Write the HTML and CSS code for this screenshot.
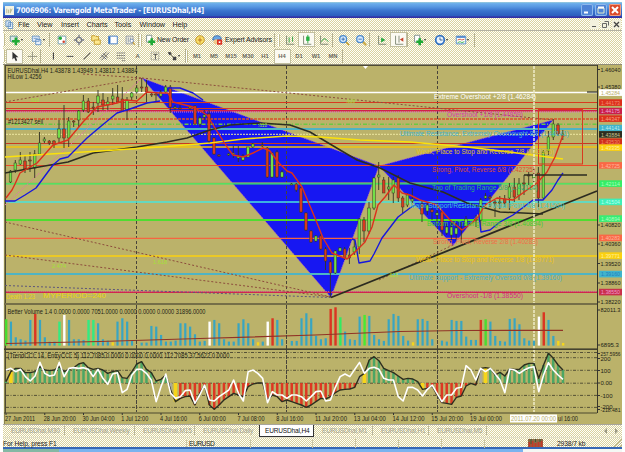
FILE: index.html
```html
<!DOCTYPE html>
<html lang="en">
<head>
  <meta charset="UTF-8" />
  <title>7006906: Varengold MetaTrader - [EURUSDhal,H4]</title>
  <link rel="stylesheet" href="styles.css">
</head>
<body>
  <div class="window">
    <div class="titlebar">
      <svg class="app-icon" viewBox="0 0 10 10"><rect width="10" height="10" fill="#f4f4e4"/><path d="M2 3v5M4 4v4M6 7l2-4M6 3v5" stroke="#b4b48c" fill="none"/></svg>
      <span class="title">7006906: Varengold MetaTrader - [EURUSDhal,H4]</span>
      <div class="win-buttons">
        <svg viewBox="0 0 12 12"><path d="M3 8.5h4" stroke="#fff" stroke-width="2"/></svg>
        <svg viewBox="0 0 12 12"><path d="M3 4h6v5H3z" stroke="#dfe9c9" fill="none"/><path d="M3 3.5h6" stroke="#fff" stroke-width="2"/></svg>
        <svg class="close" viewBox="0 0 12 12"><path d="M3 3l6 6M9 3l-6 6" stroke="#fff" stroke-width="2"/></svg>
      </div>
    </div>

    <div class="menubar">
      <svg class="doc-icon" viewBox="0 0 10 10"><path d="M1 1h5v6H1zM3.500 3h5v6.500h-5z" fill="#eef6ff" stroke="#5a8cc0"/><path d="M5 5h2M5 7h2" stroke="#5a8cc0"/></svg>
      <span class="m-file">File</span><span class="m-view">View</span><span class="m-insert">Insert</span><span class="m-charts">Charts</span><span class="m-tools">Tools</span><span class="m-window">Window</span><span>Help</span>
      <div class="mdi-buttons">
        <svg viewBox="0 0 9 9"><path d="M2 6.500h4" stroke="#555"/></svg>
        <svg viewBox="0 0 9 9"><path d="M3.500 1.500h4v4M1.500 3.500h4v4h-4z" stroke="#666" fill="none"/></svg>
        <svg viewBox="0 0 9 9"><path d="M2 2l5 5M7 2l-5 5" stroke="#444" stroke-width="1.300"/></svg>
      </div>
    </div>

    <div class="toolbar">
      <i class="grip"></i>
      <b class="drop"><svg viewBox="0 0 14 14"><path d="M1.500 2.500h8v6h-8z" fill="#dfe8e8" stroke="#5d8d96"/><path d="M8 4v9M3.500 8.500h9" stroke="#1faa35" stroke-width="3"/></svg></b>
      <b class="drop"><svg viewBox="0 0 14 14"><path d="M1.500 2.500h8v6h-8zM5.500 6.500h6v6h-6z" fill="#e8f1fb" stroke="#5b8cc4"/><path d="M3 5h5" stroke="#5b8cc4"/></svg></b>
      <i class="sep s4"></i>
      <b><svg viewBox="0 0 14 14"><path d="M2.500 2.500h9v9h-9z" fill="#fff" stroke="#6d97a8"/><circle cx="5" cy="5" r="2" fill="#22aa3a"/><circle cx="9" cy="9" r="1.500" fill="#d3422c"/></svg></b>
      <b><svg viewBox="0 0 14 14"><circle cx="7" cy="7" r="3" fill="none" stroke="#777b86" stroke-width="1.500"/><path d="M7 1v3M7 10v3M1 7h3M10 7h3" stroke="#777b86" stroke-width="1.500"/></svg></b>
      <b><svg viewBox="0 0 14 14"><path d="M2 2h4l1 1h3v5H2z" fill="#f9e58a" stroke="#c19724"/><path d="M5 7h7v5H5z" fill="#ffe98f" stroke="#c19724"/></svg></b>
      <b><svg viewBox="0 0 14 14"><path d="M2 2.500h10v9H2z" fill="#fff" stroke="#2f6fc4"/><path d="M3 3v8" stroke="#2f6fc4" stroke-width="2"/></svg></b>
      <b><svg viewBox="0 0 14 14"><path d="M2.500 2.500h8v9h-8z" fill="#f0efe0" stroke="#8a92a0"/><path d="M5 4v6M7.500 4v4" stroke="#8a92a0"/><circle cx="9" cy="8" r="2" fill="#fff" stroke="#6d86ad"/><path d="M10.500 9.500l2 3" stroke="#c9a13a" stroke-width="1.500"/></svg></b>
      <i class="sep s2"></i><i class="grip g4"></i>
      <b class="b12"><svg viewBox="0 0 14 14"><path d="M3 1.500h6v8H3z" fill="#fff" stroke="#7a8b8b"/><path d="M9 5v8M5 9h8" stroke="#1faa35" stroke-width="3"/></svg></b>
      <span class="label-order">New Order</span>
      <b><svg viewBox="0 0 14 14"><circle cx="7" cy="7" r="5" fill="#fbe06a" stroke="#b98a18"/><path d="M7 4v6M4.500 7h5" stroke="#b06d18" fill="none"/></svg></b>
      <b><svg viewBox="0 0 14 14"><path d="M2 7q0-5 5-5t5 4l-3 1z" fill="#69a5e2" stroke="#3569aa"/><circle cx="6" cy="9" r="3" fill="#f0c98b"/><path d="M7 6.500h6v6H7z" fill="#dc3322"/><path d="M9 8.500h2v2H9z" fill="#fff"/></svg></b>
      <span class="label-expert">Expert Advisors</span>
      <i class="sep s4"></i><i class="grip"></i>
      <b><svg viewBox="0 0 14 14"><path d="M3 2v10h9" fill="none" stroke="#76806c"/><path d="M6 4v6M10 3v6" stroke="#1f9b35"/></svg></b>
      <b class="pressed"><svg viewBox="0 0 14 14"><path d="M3 2v10h9" fill="none" stroke="#76806c"/><path d="M8 1v10" stroke="#1f9b35"/><path d="M6 3h4v5H6z" fill="#29b243"/></svg></b>
      <b><svg viewBox="0 0 14 14"><path d="M3 2v10h9" fill="none" stroke="#76806c"/><path d="M4 9q3-7 8 0" fill="none" stroke="#1f9b35"/></svg></b>
      <i class="sep s3"></i>
      <b><svg viewBox="0 0 14 14"><path d="M9 9l4 4" stroke="#c7a233" stroke-width="2"/><circle cx="6" cy="6" r="4" fill="#d8ecff" stroke="#4b8ace" stroke-width="1.500"/><path d="M4 6h4M6 4v4" stroke="#2b62a8"/></svg></b>
      <b><svg viewBox="0 0 14 14"><path d="M9 9l4 4" stroke="#c7a233" stroke-width="2"/><circle cx="6" cy="6" r="4" fill="#d8ecff" stroke="#4b8ace" stroke-width="1.500"/><path d="M4 6h4" stroke="#2b62a8"/></svg></b>
      <i class="sep s4"></i>
      <b><svg viewBox="0 0 14 14"><path d="M3 2v10h9" fill="none" stroke="#76806c"/><path d="M6 4l5 3-5 3z" fill="#25a83c"/></svg></b>
      <b class="pressed"><svg viewBox="0 0 14 14"><path d="M3 2v10h9M7 2v8" fill="none" stroke="#76806c"/><path d="M12 4L8 6.500 12 9z" fill="#c6432c"/></svg></b>
      <i class="sep s2"></i>
      <b class="drop"><svg viewBox="0 0 14 14"><path d="M3 1.500h6v8H3z" fill="#fff" stroke="#7a8b8b"/><path d="M9 5v8M5 9h8" stroke="#1faa35" stroke-width="3"/></svg></b>
      <b class="drop"><svg viewBox="0 0 14 14"><circle cx="7" cy="7" r="5" fill="#e9f4ff" stroke="#2f70c2" stroke-width="2"/><path d="M7 4v3h3" stroke="#2c4f80" fill="none"/></svg></b>
      <b class="drop"><svg viewBox="0 0 14 14"><path d="M1.500 2.500h11v9h-11z" fill="#fff" stroke="#4a85cc"/><path d="M2 3.500h10" stroke="#4a85cc" stroke-width="2"/><path d="M3 7l3-1 2 1 3-1" stroke="#c6432c" fill="none"/><path d="M3 10l3-1 2 1 3-1" stroke="#25a83c" fill="none"/></svg></b>
      <i class="sep s2"></i>
    </div>

    <div class="toolbar tools">
      <i class="grip"></i>
      <b class="pressed"><svg viewBox="0 0 14 14"><path d="M4 2v9l2-2 2 4 1.500-1L8 8.500h3z" fill="#333"/></svg></b>
      <b><svg viewBox="0 0 14 14"><path d="M7.500 2v11M2 7.500h11" stroke="#8c8c78"/></svg></b>
      <i class="sep s4"></i>
      <b><svg viewBox="0 0 14 14"><path d="M7.500 3v8" stroke="#444" stroke-width="1.300"/></svg></b>
      <b><svg viewBox="0 0 14 14"><path d="M3 7.500h8" stroke="#666" stroke-width="1.300"/></svg></b>
      <b><svg viewBox="0 0 14 14"><path d="M3 11l8-8" stroke="#666" stroke-width="1.300"/></svg></b>
      <b><svg viewBox="0 0 14 14"><path d="M2 10l8-8M4 12l9-9M4 6l6 5M6 4l5 5" stroke="#555"/></svg></b>
      <b><svg viewBox="0 0 14 14"><path d="M2 3.500h10M2 6.500h10M2 9.500h10M8 12.500h4" stroke="#666" stroke-dasharray="2 .6"/></svg></b>
      <b class="letter">A</b>
      <b><svg viewBox="0 0 14 14"><path d="M2.500 2.500h9v9h-9z" fill="none" stroke="#777" stroke-dasharray="1 1"/><path d="M5 5h5M7.500 5v6" stroke="#444"/></svg></b>
      <b class="drop"><svg viewBox="0 0 14 14"><path d="M2 3l3-1 2 3-3 1zM8 8h4v4H8z" fill="#444"/><path d="M6 6l3 3" stroke="#555"/></svg></b>
      <i class="sep s1"></i><i class="grip"></i>
      <b class="letter">M1</b><b class="letter">M5</b><b class="letter">M15</b><b class="letter">M30</b><b class="letter">H1</b><b class="letter pressed">H4</b><b class="letter">D1</b><b class="letter">W1</b><b class="letter">MN</b>
      <i class="sep s2"></i>
    </div>

    <svg class="chart" id="chart" viewBox="3 64 619 360"></svg>

    <div class="tabs">
      <span class="tab t1">EURUSDhal,M30</span><span class="tab t2">EURUSDhal,Weekly</span><span class="tab t3">EURUSDhal,M15</span><span class="tab t4">EURUSDhal,Daily</span><span class="tab active">EURUSDhal,H4</span><span class="tab t5">EURUSDhal,M1</span><span class="tab t6">EURUSDhal,H1</span><span class="tab t7">EURUSDhal,M5</span>
      <svg class="tab-arrows" viewBox="0 0 20 8"><path d="M5 1v6L2 4zM13 1v6l3-3z" fill="#9c9a84"/></svg>
    </div>

    <div class="statusbar">
      <span class="help">For Help, press F1</span>
      <span class="symbol">EURUSD</span>
      <span class="cell c1"></span><span class="cell c2"></span><span class="cell c2"></span><span class="cell c2"></span><span class="cell c2"></span><span class="cell c3"></span>
      <svg class="meter" viewBox="0 0 15 8"><path d="M0 0h15v8H0z" fill="#8b6a45"/><path d="M1.500 3v5M4.500 2v6M7.500 4v4M10.500 3v5M13.500 2v6" stroke="#c23a28" stroke-width="2"/><path d="M3 0v5M7.500 0v3M12 0v3" stroke="#3f5a35"/></svg>
      <span class="traffic">2938/7 kb</span>
      <svg class="resize" viewBox="0 0 8 8"><path d="M0 8l8-8M3 8l5-5M6 8l2-2" stroke="#b5b08a"/></svg>
    </div>
  </div>
  <div class="taskbar"><div class="taskbar-blue"><div class="start"></div></div></div>

  <script src="chart.js"></script>
</body>
</html>
```
FILE: styles.css
```css
body {
  margin: 0;
  width: 625px;
  height: 452px;
  background: #fff;
  overflow: hidden;
  font-family: "Liberation Sans", Arial, sans-serif;
  font-size: 7px;
  color: #222;
}
svg {
  display: block;
  flex: none;
}
.window {
  margin: 2px 3px 0;
  width: 619px;
  height: 445px;
  display: flex;
  flex-direction: column;
  background: repeating-conic-gradient(#fffffa 0 25%, #dad29e 0 50%) 0 0 / 2px 2px;
}
.window span {
  white-space: nowrap;
  flex: none;
}
.titlebar {
  height: 16px;
  flex: none;
  display: flex;
  align-items: center;
  box-sizing: border-box;
  padding: 0 1px 0 2px;
  background: linear-gradient(#9ccdda 0, #6aaceb 10%, #5797e2 30%, #3a74cd 55%, #2b5cbd 88%, #3432a6 92%);
  color: #f4f7ff;
}
.app-icon {
  width: 9px;
  height: 9px;
}
.title {
  margin-left: 2px;
  width: 192px;
  font: bold 7.8px "DejaVu Sans Condensed", "DejaVu Sans", sans-serif;
  letter-spacing: -0.25px;
}
.win-buttons {
  margin-left: auto;
  display: flex;
  gap: 2px;
}
.win-buttons svg {
  width: 12px;
  height: 12px;
  background: #4e83d5;
  border-radius: 2px;
  box-shadow: inset 0 0 0 1px #8db8eb;
}
.win-buttons .close {
  background: #db4b2c;
  box-shadow: inset 0 0 0 1px #ef9d82;
}
.menubar {
  height: 12px;
  flex: none;
  display: flex;
  align-items: center;
  border-bottom: 1px solid #b3b1a0;
  padding-left: 2px;
  font-size: 7.2px;
}
.doc-icon {
  width: 9px;
  height: 9px;
  margin-right: 4px;
}
.m-file { width: 19px; }
.m-view { width: 24px; }
.m-insert { width: 25.5px; }
.m-charts { width: 28px; }
.m-tools { width: 25px; }
.m-window { width: 33px; }
.mdi-buttons {
  margin-left: auto;
  display: flex;
  gap: 2px;
  padding-right: 1px;
}
.mdi-buttons svg {
  width: 9px;
  height: 9px;
  background: #f3f1de;
}
.toolbar {
  height: 17px;
  flex: none;
  display: flex;
  align-items: center;
  box-sizing: border-box;
}
.tools {
  height: 16px;
}
.toolbar b {
  flex: none;
  width: 17px;
  height: 15px;
  display: flex;
  align-items: center;
  justify-content: center;
  box-sizing: border-box;
}
.toolbar b svg {
  width: 12px;
  height: 12px;
}
.toolbar b.drop {
  width: 21.5px;
  justify-content: flex-start;
  padding-left: 3px;
}
.toolbar b.drop::after {
  content: "";
  border: 1.5px solid transparent;
  border-top: 2px solid #333;
  border-bottom: 0;
}
.toolbar b.b12 { width: 12px; }
.toolbar b.letter {
  font-size: 5.8px;
  color: #6a685c;
}
.toolbar b.pressed {
  background: #fbfaf2;
  border: 1px solid #c2bf9f;
}
.grip {
  flex: none;
  width: 3px;
  height: 12px;
  background: linear-gradient(90deg, #fff 1px, #c4be90 1px 2px, transparent 2px);
}
.g4 { width: 4px; }
.sep {
  flex: none;
  height: 14px;
  background: linear-gradient(90deg, #b5b190 1px, transparent 1px);
}
.s1 { width: 1px; }
.s2 { width: 2px; }
.s3 { width: 3px; }
.s4 { width: 4px; }
.label-order {
  width: 34px;
  padding-left: 1px;
  font-size: 6.8px;
  letter-spacing: -0.1px;
}
.label-expert {
  width: 49px;
  font-size: 7px;
  letter-spacing: -0.12px;
}
.chart {
  width: 619px;
  height: 360px;
}
.chart text {
  font-family: "Liberation Sans", Arial, sans-serif;
}
.tabs {
  height: 13px;
  flex: none;
  display: flex;
  box-sizing: border-box;
  border-top: 1px solid #a8a59a;
  font-size: 6.5px;
  letter-spacing: -0.15px;
  line-height: 11px;
}
.tab {
  box-sizing: border-box;
  height: 9px;
  line-height: 9px;
  margin-top: 1px;
  padding-left: 8px;
  color: #a3a18c;
  border-right: 1px solid #b9b69c;
}
.tab.active {
  width: 55px;
  height: 12px;
  line-height: 11px;
  margin-top: 0;
  padding-left: 5px;
  background: #fff;
  border: 1px solid #333;
  border-top: 0;
  color: #111;
}
.t1 { width: 62px; }
.t2 { width: 70px; }
.t3 { width: 60px; }
.t4 { width: 64px; border: 0; }
.t5 { width: 59px; }
.t6 { width: 56px; }
.t7 { width: 58px; }
.tab-arrows {
  width: 20px;
  height: 8px;
  margin: 2px 0 0 auto;
}
.statusbar {
  height: 11px;
  flex: none;
  display: flex;
  align-items: center;
  box-sizing: border-box;
  border-top: 1px solid #e3e0c8;
  font-size: 6.7px;
  letter-spacing: -0.1px;
}
.help { width: 183px; }
.symbol {
  width: 61px;
  padding-left: 2px;
  border-left: 1px solid #c9c5a4;
  letter-spacing: -0.5px;
}
.cell {
  height: 9px;
  box-sizing: border-box;
  border-left: 1px solid #c9c5a4;
}
.c1 { width: 62px; }
.c2 { width: 43px; }
.c3 { width: 44px; }
.meter {
  width: 15px;
  height: 8px;
}
.traffic { margin-left: 14px; }
.resize {
  width: 8px;
  height: 8px;
  margin-left: auto;
}
.taskbar {
  height: 5px;
  margin: 0 3px;
  background: linear-gradient(#3768b5 2px, #f4f8f4 2px);
}
.taskbar-blue {
  width: 520px;
  height: 3px;
  padding-top: 2px;
  background: linear-gradient(#3768b5 2px, #79b3ef 2px);
}
.start {
  width: 56px;
  height: 3px;
  background: #84b8a4;
}
```
FILE: chart.js
```js
const svg = document.getElementById('chart');
const parts = [];
const STEP = 4.843;
const X0 = 6;

function line(x1, y1, x2, y2, color, w = 1, dash = '') {
  parts.push(`<line x1="${x1}" y1="${y1}" x2="${x2}" y2="${y2}" stroke="${color}" stroke-width="${w}" stroke-dasharray="${dash}"/>`);
}
function rect(x, y, w, h, fill) {
  parts.push(`<rect x="${x}" y="${y}" width="${w}" height="${h}" fill="${fill}"/>`);
}
function poly(points, color, w = 1.2) {
  parts.push(`<polyline points="${points}" fill="none" stroke="${color}" stroke-width="${w}" stroke-linejoin="round"/>`);
}
function text(x, y, str, color, len, size = 6.6) {
  const fit = len ? `textLength="${len}" lengthAdjust="spacingAndGlyphs"` : '';
  parts.push(`<text x="${x}" y="${y}" fill="${color}" font-size="${size}" ${fit}>${str}</text>`);
}

rect(3, 64, 619, 360, '#bbb26a');
rect(3, 64, 619, 1, '#8f8c78');
rect(3, 65, 1, 359, '#f5f3df');
rect(4, 65, 1, 359, '#8a854f');
rect(5, 65, 592, 1, '#4f4b35');
rect(5, 65, 1, 348, '#4f4b35');

// price channels filled between swing points
parts.push('<g fill="#1717f2" stroke="#b05cc0" stroke-width=".8" stroke-dasharray="1.5 1"><path d="M142 78L379 166 331 297.500z"/><path d="M379 166L553 120 453 245.500z"/></g>');

// vertical session separators
for (const x of [136.5, 286.5, 437.5]) line(x, 66, x, 412, '#47433a', 1, '3 2');

// horizontal levels
const levels = [
  [92.5, '#fff', 1.4], [102.5, '#d83a20', 1], [108.5, '#d83a20', 1], [110.7, '#d02048', 1.5],
  [112, '#e06cd0', 1, '1 1'], [119, '#d8522a', 1.4, '3 1'], [124.3, '#6cc843', 1.6, '4 1.5 1 2'],
  [129, '#4fb3c4', 2], [134.3, '#eee6a0', 1, '2 1'], [143.5, '#c83a20', 1], [147, '#f0c410', 1.6],
  [165.5, '#ee4a28', 1], [182.9, '#a8b060', 1], [183.9, '#38ee60', 1.4], [202, '#48e4dc', 1.5],
  [220, '#4fdd30', 1.8], [238.3, '#f56640', 1.3], [256, '#fbd010', 1.4],
  [274, '#4fb4c4', 1.8], [291.5, '#d050a0', 1, '1 1'], [292.4, '#d0284c', 1.2]
];
for (const [y, color, w, dash] of levels) line(6, y, 597, y, color, w, dash);

// projection lines
const projections = [
  [142, 78, 553, 120], [5, 102, 142, 78], [83, 74, 142, 78],
  [5, 222, 331, 297], [5, 255, 331, 297]
];
for (const p of projections) line(...p, '#8d4c3c', 1, '2 2');
line(5, 285.5, 331, 297.5, '#5d567a', 1, '2 2');
line(5, 205, 142, 78, '#e573aa', 1, '1.500 1');
line(379, 280, 453, 245, '#8d4c3c', 1, '2 2');

// [x, high, low, body top, body bottom, colour]
const candles = [
  [10.5, 170, 183, 171, 182, 'g'], [15.3, 160, 173, 163, 170, 'g'], [20.3, 152, 165, 160, 164, 'g'], [25, 155, 173, 161, 169, 'r'],
  [30, 152, 172, 160, 161, 'r'], [34.7, 150, 178, 154, 168, 'g'], [39.5, 132, 155, 143, 154, 'g'], [44.4, 137, 143, 139, 141, 'g'],
  [49.3, 140, 145, 141, 143, 'r'], [54, 140, 148, 141, 144, 'r'], [59, 120, 143, 129, 138, 'g'], [64, 105, 148, 129, 138, 'r'],
  [68.7, 117, 147, 121, 138, 'g'], [73.7, 120, 127, 121, 122, 'r'], [78.7, 110, 127, 111, 120, 'g'], [83.4, 95, 112, 101, 110, 'g'],
  [88.3, 98, 113, 101, 112, 'r'], [93.3, 102, 115, 107, 108, 'r'], [98, 90, 112, 96, 103, 'g'], [103, 93, 110, 100, 105, 'r'],
  [107.8, 97, 110, 102, 105, 'g'], [112.7, 88, 105, 96, 99, 'g'], [117.6, 85, 103, 97, 102, 'r'], [122.3, 87, 112, 99, 111, 'r'],
  [127, 97, 120, 100, 110, 'g'], [131.7, 92, 100, 93, 97, 'g'], [136.7, 85, 93, 88, 92, 'g'], [141.7, 78, 92, 87, 88, 'r'],
  [146.5, 80, 102, 87, 92, 'r'], [151.7, 92, 97, 94, 95, 'r'], [156, 93, 102, 94, 95, 'r'], [160.7, 90, 98, 92, 96, 'g'],
  [165.7, 85, 93, 87, 92, 'g'], [170.3, 85, 113, 87, 107, 'r'], [175, 105, 110, 107, 108, 'g'], [180, 105, 110, 108, 109, 'r'],
  [190, 105, 110, 107, 108, 'g'], [195, 105, 125, 106, 124, 'r'], [200, 116, 127, 118, 124, 'g'], [204.3, 110, 120, 115, 117, 'g'],
  [209, 110, 143, 114, 141, 'r'], [214, 137, 155, 138, 154, 'r'], [219, 154, 157, 155, 156, 'r'], [228.5, 153, 156, 154, 155, 'g'],
  [233.3, 146, 158, 153, 154, 'g'], [238.3, 146, 162, 156, 158, 'g'], [243, 154, 161, 156, 160, 'g'], [248, 147, 157, 147, 157, 'g'],
  [252.8, 143, 148, 144, 147, 'g'], [262.3, 142, 147, 145, 146, 'r'], [267.3, 147, 178, 148, 177, 'r'], [272, 152, 178, 153, 177, 'g'],
  [277, 150, 178, 152, 177, 'r'], [282, 170, 178, 172, 177, 'g'], [291.5, 183, 185, 184, 185, 'g'], [296.3, 183, 192, 184, 190, 'r'],
  [301, 187, 213, 188, 212, 'r'], [306, 212, 231, 213, 230, 'r'], [311, 230, 243, 231, 242, 'r'], [315.8, 235, 242, 236, 241, 'g'],
  [320.7, 234, 250, 236, 249, 'r'], [325.5, 247, 270, 249, 261, 'r'], [330.4, 260, 297, 262, 273, 'r'], [335.3, 250, 274, 251, 273, 'g'],
  [340, 247, 251, 248, 251, 'g'], [344.7, 247, 260, 249, 258, 'r'], [349.4, 248, 264, 255, 258, 'r'], [354.3, 240, 255, 247, 252, 'g'],
  [359.3, 218, 254, 219, 247, 'g'], [364, 217, 242, 220, 231, 'r'], [369, 202, 234, 208, 231, 'g'], [374, 177, 210, 178, 208, 'g'],
  [378.7, 162, 190, 175, 177, 'g'], [383.7, 177, 193, 180, 193, 'r'], [388.7, 177, 200, 187, 189, 'g'], [393.3, 177, 203, 180, 193, 'g'],
  [398.3, 175, 202, 178, 198, 'r'], [402.7, 196, 213, 198, 207, 'r'], [407.4, 193, 207, 195, 205, 'g'], [412.3, 188, 203, 199, 201, 'g'],
  [422, 200, 222, 204, 214, 'r'], [427.3, 202, 215, 205, 211, 'g'], [432, 208, 220, 210, 212, 'r'], [437, 210, 222, 213, 215, 'g'],
  [442, 211, 236, 212, 230, 'r'], [446.7, 224, 235, 227, 233, 'g'], [451.4, 222, 242, 227, 235, 'g'], [456.2, 223, 240, 228, 234, 'g'],
  [461.3, 222, 243, 229, 230, 'r'], [466, 216, 228, 219, 226, 'g'], [476, 215, 227, 219, 220, 'r'], [480.7, 198, 230, 200, 220, 'g'],
  [485.5, 193, 199, 196, 198, 'g'], [490, 195, 207, 197, 198, 'r'], [495, 200, 217, 202, 203, 'r'], [499.8, 196, 209, 202, 203, 'g'],
  [504.7, 195, 207, 199, 203, 'r'], [509.4, 183, 210, 187, 198, 'g'], [514.3, 178, 202, 187, 197, 'r'], [519, 178, 200, 184, 195, 'g'],
  [524, 175, 195, 183, 184, 'r'], [528.7, 172, 185, 175, 176, 'r'], [533.7, 166, 183, 175, 178, 'g'], [538.4, 167, 207, 173, 198, 'r'],
  [543.4, 150, 200, 152, 198, 'g'], [548.4, 131, 155, 137, 151, 'g'], [553.3, 119, 140, 124, 137, 'g'], [558, 123, 136, 125, 134, 'r'], [562.8, 130, 140, 134, 136, 'g']
];
for (const [x, hi, lo, top, bot, c] of candles) {
  line(x, hi, x, lo, '#343424', .9);
  parts.push(`<rect x="${x - 1.3}" y="${top}" width="2.600" height="${Math.max(bot - top, .6)}" fill="${c === 'g' ? '#72df48' : '#d83820'}" stroke="#3c3c22" stroke-width=".5"/>`);
}

// moving averages
poly('5,173 33,168 68,162 93,153 137,147 167,142 187,138 210,130 230,125 260,123 290,125 310,132 330,144 357,160 380,168 410,183 443,192 467,203 500,212 543,214', '#2d2d20', 1.5);
poly('5,157 50,154 100,151 160,147 210,143 243,139 287,136 320,137 360,140 410,142 467,147 517,153 563,159', '#fbe10c', 1.6);
poly('5,201 15,201 25,195 36,188 39,184 53,165 60,159 68,157 87,138 100,127 117,113 130,109 147,103 160,101', '#1717dd', 1.4);
poly('168,88 180,88 193,93 203,100', '#1717dd', 1.4);
poly('352,239 355,240 359,263 370,261 374,254 382,238 398,217 410,208 415,205', '#1717dd', 1.4);
poly('478,210 481,232 490,230 500,222 513,215 533,200 543,200 552,190 558,180 563,173', '#1717dd', 1.4);
poly('6,198 12,190 15,184 20,173 37,163 53,145 68,140 83,122 97,107 117,103 125,100 137,101 147,92 160,93 168,93 173,102 193,107 202,112 207,115 215,128 227,147 233,155 243,157 253,153 263,148 270,151 278,162 287,171 292,173 302,187 315,218 323,238 332,253 347,259 355,252 365,242 372,227 378,205 385,197 394,185 402,193 410,195 420,200 437,205 443,212 450,220 462,230 472,223 478,217 485,205 497,198 513,200 527,190 537,183 547,172 555,157 563,135', '#dc301c', 1.4);

// trend line, targets and selection
line(331, 297.5, 597, 191, '#2b2b20', 1.8);
line(524, 175, 587, 175, '#2b2b20', 1.4);
line(587, 92, 597, 92, '#2b2b20', 1.2);
parts.push('<rect x="538.500" y="109.500" width="44" height="54.500" fill="none" stroke="#d83a20"/>');
line(534, 66, 534, 412, '#f0ecc8', 1.5, '3 1');
parts.push('<path d="M363 66h5l-2.500 3z" fill="#fff"/>');

text(7.5, 72.5, 'EURUSDhal,H4  1.43878 1.43949 1.43812 1.43884', '#222216', 130);
text(7.5, 79, 'HiLow 1.4256', '#222216', 34);
text(8, 124, '#1213427 sell', '#222216', 35, 6.4);
text(434, 99, 'Extreme Overshoot +2/8 (1.46284)', '#fff', 102);
text(447, 117, 'Overshoot +1/8 (1.44859)', '#d93bb0', 76);
text(400, 135.5, 'Ultimate Resistance, Extremely Overbought 8/8 (1.44141)', '#42b4cf', 169);
text(416, 153.5, 'Weak, Place to Stop and Reverse 7/8 (1.43335)', '#e3c418', 138);
text(432, 172, 'Strong, Pivot, Reverse 6/8 (1.42725)', '#dd5034', 103);
text(432, 190, 'Top of Trading Range 5/8 (1.42114)', '#27b374', 106);
text(410, 208, 'Major Support/Resistance Pivotal Point 4/8 (1.41504)', '#3dcfd4', 155);
text(427, 226, 'Bottom of Trading Range 3/8 (1.40894)', '#43cc30', 116);
text(433, 244, 'Strong, Pivot, Reverse 2/8 (1.40283)', '#f07048', 105);
text(416, 262, 'Weak, Place to Stop and Reverse 1/8 (1.39771)', '#f0c414', 138);
text(409, 280, 'Ultimate Support - Extremely Oversold 0/8 (1.39160)', '#47b0c8', 153);
text(447, 298, 'Overshoot -1/8 (1.38550)', '#d52d88', 76);
text(6, 298.5, 'Death 1:23', '#ead414', 29);
text(43, 297.5, 'MYPERIOD=240', '#ead414', 63, 8);
text(52, 268, '2.474', '#a5e037', 14, 6);
text(153, 263.5, '1.618', '#a5e037', 14, 6);
text(346, 103, '.618', '#a5e037', 9, 5.5);
text(258, 127, '.618', '#a5e037', 9, 5.5);
text(388, 277, '.618', '#a5e037', 10, 5.5);
text(30, 102, '.618', '#a5e037', 9, 5);

// volume window
rect(4, 303, 593, 2, '#756f48');
const baseline = 345.6;
const volume = [58, 65, 112, 118, 122, 60, 42, 60, 112, 125, 125, 65, 45, 60, 118, 118, 120, 60, 60, 70, 118, 122, 127, 65, 55, 65, 122, 137, 128, 128, 78, 80, 105, 125, 125, 122, 70, 70, 80, 103, 125, 123, 65, 60, 70, 118, 125, 125, 70, 58, 70, 118, 127, 125, 65, 55, 60, 118, 137, 123, 123, 55, 40, 55,
  108, 118, 115, 27, 22, 52, 95, 118, 120, 50, 45, 48, 105, 118, 123, 58, 42, 48, 108, 122, 127, 58, 57, 63, 118, 137, 122, 125, 60, 63, 63, 110, 120, 120, 60, 58, 65, 108, 123, 125, 57, 55, 73, 115, 122, 122, 50, 37, 60, 108, 123, 129];
const special = {
  0: '#48dc30', 6: '#db3522', 11: '#32eb82', 12: '#fff', 17: '#32eb82', 18: '#32eb82', 22: '#f4d51c', 42: '#fff', 52: '#f4d51c', 54: '#fff', 55: '#db3522',
  67: '#db3522', 68: '#db3522', 69: '#32eb62', 74: '#48ea30', 84: '#f4d51c', 98: '#db3522', 99: '#48dc30', 110: '#fff', 111: '#db3522', 114: '#f4d51c', 115: '#f4d51c'
};
volume.forEach((v, i) => {
  const h = (137 - v) / 3;
  rect(X0 + i * STEP - 1, baseline - h, special[i] ? 2.4 : 2.2, h, special[i] || '#38a5c2');
});
poly('6,343.500 100,341.500 200,338.500 315,335 400,331.500 460,330.500 563,330.300', '#913326', 1.2);
text(7.5, 313.5, 'Better Volume 1.4 0.0000 0.0000 7051.0000 0.0000 0.0000 0.0000 31896.0000', '#222216', 198);

// CCI window
rect(4, 348.4, 593, 1.6, '#45432f');
for (const y of [352.5, 357.7, 370.3, 383.2, 395.4, 407.4]) line(6, y, 597, y, '#4a4630', .9, '3 1.500 1 1.500');
for (const x of [136.5, 286.5, 437.5]) line(x, 305, x, 412, '#47433a', 1, '3 2');
const trend = [245, 215, 205, 205, 218, 218, 215, 200, 210, 212, 210, 200, 215, 208, 203, 192, 188, 203, 208, 205, 210, 220, 215, 212, 233, 235, 215, 192, 185, 208, 218, 243, 238, 225, 270, 305, 295, 290, 288, 315, 280, 255, 315, 328, 315, 300, 290, 280, 285, 290, 260, 252, 249, 249, 300, 285, 290, 305, 300, 305, 310, 315, 322, 315,
  305, 295, 297, 290, 278, 270, 268, 267, 262, 230, 220, 180, 170, 182, 205, 212, 218, 228, 238, 235, 237, 245, 268, 265, 258, 285, 308, 310, 313, 292, 288, 258, 250, 255, 205, 203, 205, 225, 217, 228, 207, 208, 208, 195, 190, 190, 235, 195, 160, 175, 195, 210];
const entry = [210, 205, 215, 208, 230, 243, 228, 187, 220, 228, 225, 187, 230, 205, 203, 205, 203, 208, 230, 208, 235, 253, 222, 218, 278, 268, 225, 208, 208, 220, 240, 305, 260, 222, 280, 295, 290, 272, 270, 310, 285, 255, 300, 303, 290, 280, 270, 240, 280, 303, 215, 210, 220, 235, 308, 275, 285, 285, 295, 285, 285, 290, 303, 290,
  275, 273, 303, 300, 262, 230, 222, 230, 208, 187, 220, 205, 202, 208, 235, 240, 240, 290, 303, 262, 262, 270, 288, 268, 255, 280, 305, 285, 285, 265, 262, 197, 210, 240, 205, 215, 205, 222, 240, 278, 207, 210, 220, 210, 203, 200, 275, 225, 188, 210, 225, 238];
const yellowBars = [1, 35, 74, 86, 99];
const greyBars = [34, 73, 98];
trend.forEach((v, i) => {
  const y = 300 + v / 3;
  let color = y < 383 ? '#4ba664' : '#dc3822';
  if (yellowBars.includes(i)) color = '#f6d51a';
  if (greyBars.includes(i)) color = '#aaa99b';
  const w = yellowBars.includes(i) ? 3.6 : 2.5;
  rect(X0 + i * STEP - w / 2, Math.min(y, 383), w, Math.abs(y - 383), color);
});
const toPoints = (list) => list.map((v, i) => `${X0 + i * STEP},${300 + v / 3}`).join(' ');
poly(toPoints(trend), '#2d2f20', 1.4);
poly(toPoints(entry), '#fff', 1.6);
text(7.5, 358.3, '(TrendCCI: 14, EntryCCI: 5)  112.7085 0.0000 0.0000 0.0000 112.7085 37.5622 0.0000', '#222216', 222);

// time axis
rect(4, 412.5, 593, 1, '#4c482e');
const times = ['27 Jun 2011', '28 Jun 20:00', '30 Jun 04:00', '1 Jul 12:00', '4 Jul 16:00', '6 Jul 00:00', '7 Jul 08:00', '8 Jul 16:00', '11 Jul 20:00', '13 Jul 04:00', '14 Jul 12:00', '15 Jul 20:00', '19 Jul 00:00'];
times.forEach((t, i) => {
  const x = 5 + i * 38.75;
  text(x, 421, t, '#222216', t.length > 11 ? 32 : t[1] === ' ' ? 27 : 30);
  line(x + 1, 413, x + 1, 415, '#333');
});
text(558, 421, 'ul 16:00', '#222216', 20);
rect(510, 414.5, 47, 8, '#fff');
text(511, 421, '2011.07.20 00:00', '#b8ad66', 45);

// price axis
rect(597, 65, 1, 348, '#39372a');
const prices = [['1.46040', 69.5], ['1.45380', 87], ['1.40820', 225], ['1.40360', 244], ['1.39520', 263.5], ['1.38860', 283], ['1.38220', 302], ['82011.3', 310], ['6895.3', 345], ['257.5956', 353.5], ['200', 358.5], ['100', 370.5], ['0.00', 383], ['-100', 395.5], ['-200', 406.5], ['-218.481', 409.5]];
for (const [p, y] of prices) {
  line(597, y, 600, y, '#333');
  text(600.5, y + 2.2, p, '#222216', p.length > 6 ? 20 : 0, 6);
}
const tags = [
  ['1.45284', 92.5, '#fff', '#b9b16c'], ['1.44173', 102.5, '#dc301c', '#f58b70'], ['1.44175', 111, '#c9204a', '#f0a0d8'], ['1.44347', 118.5, '#dc301c', '#f9a080'],
  ['1.44141', 128, '#40b4cc', '#bfe9ee'], ['1.43884', 134.3, '#2c2c20', '#c8c490'], ['1.43530', 141.5, '#d0301c', '#f08868'], ['1.43335', 147.5, '#fbd010', '#fff0a0'],
  ['1.42725', 165.3, '#fa6846', '#ffb49a'], ['1.42114', 183.5, '#34ee66', '#a8ffb8'], ['1.41504', 201.8, '#3ef0b8', '#b8fff0'], ['1.40894', 218.5, '#36ee74', '#b0ffc0'],
  ['1.40283', 237.8, '#fa6846', '#ffb49a'], ['1.39771', 255.5, '#fbd010', '#fff0a0'], ['1.39160', 274, '#40b4cc', '#237fc0'], ['1.38550', 292, '#c9304c', '#f09bd0']
];
for (const [p, y, bg, fg] of tags) {
  rect(599, y - 3.2, 23, 6.6, bg);
  text(601, y + 2.2, p, fg, 19, 6);
}

svg.innerHTML = parts.join('');
```
